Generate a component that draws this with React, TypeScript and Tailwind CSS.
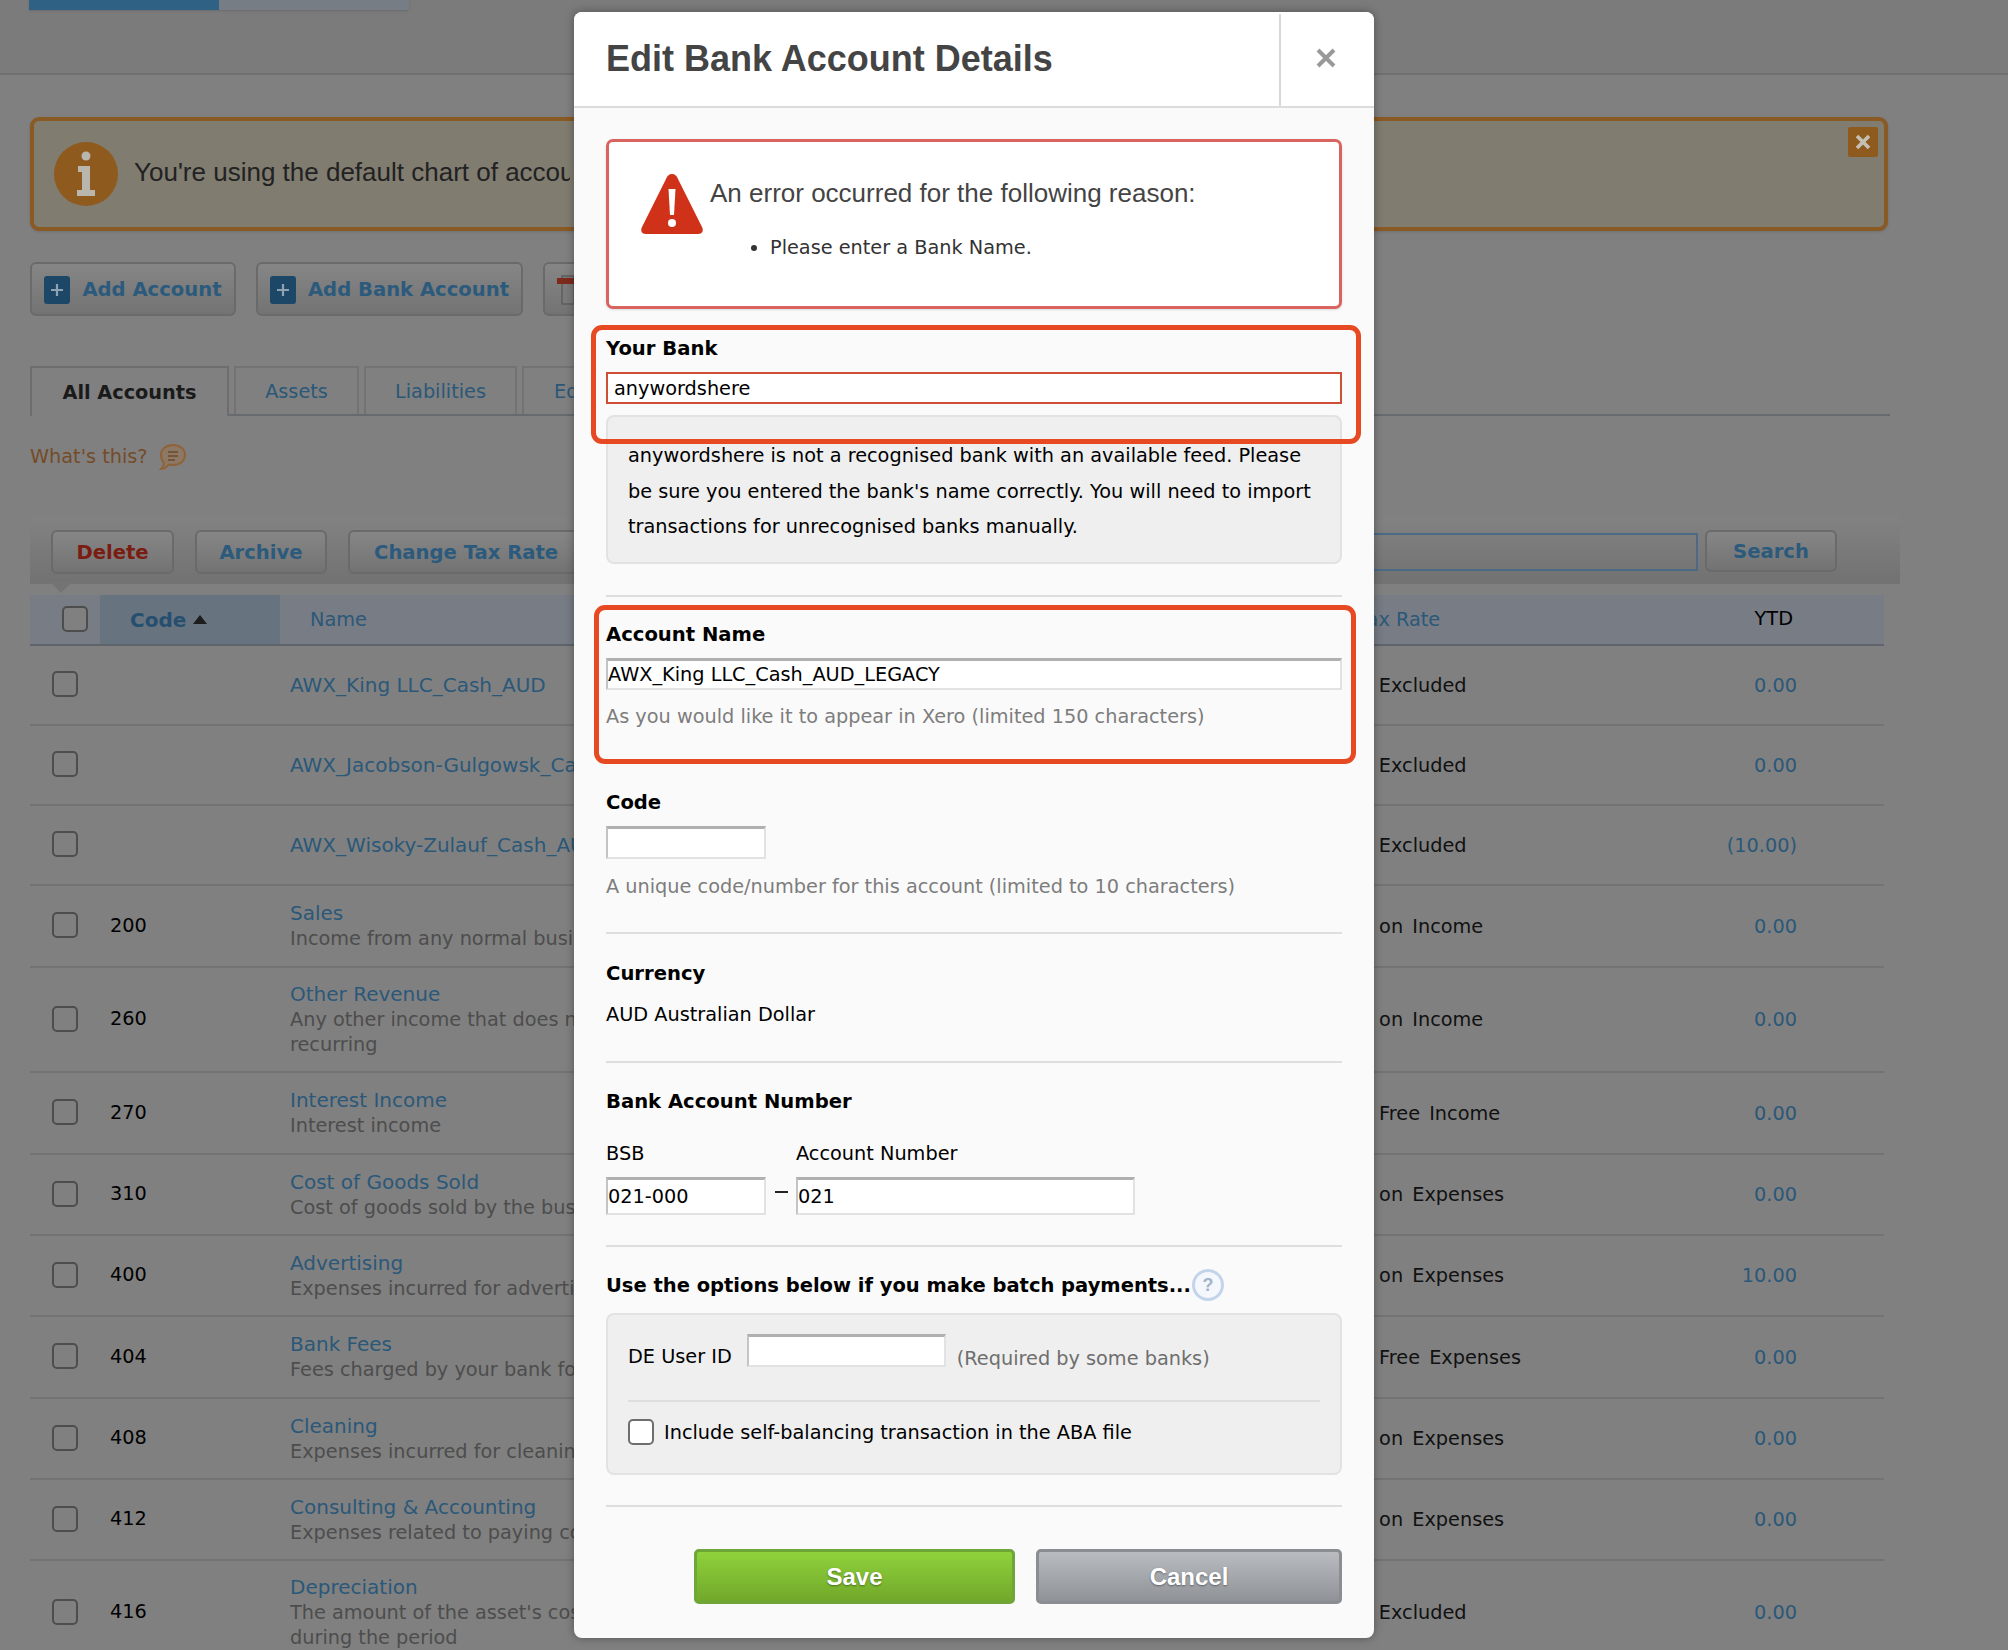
import React from 'react';

const ROWS = [
  { code: '', name: 'AWX_King LLC_Cash_AUD', tax: 'BAS Excluded', ytd: '0.00', h: 'h-[80px]' },
  { code: '', name: 'AWX_Jacobson-Gulgowsk_Cash_AUD', tax: 'BAS Excluded', ytd: '0.00', h: 'h-[80px]' },
  { code: '', name: 'AWX_Wisoky-Zulauf_Cash_AUD', tax: 'BAS Excluded', ytd: '(10.00)', h: 'h-[80px]' },
  { code: '200', name: 'Sales', desc: ['Income from any normal business activity'], tax: 'GST on Income', ytd: '0.00', h: 'h-[82px]' },
  { code: '260', name: 'Other Revenue', desc: ['Any other income that does not relate to normal business', 'recurring'], tax: 'GST on Income', ytd: '0.00', h: 'h-[105px]' },
  { code: '270', name: 'Interest Income', desc: ['Interest income'], tax: 'GST Free Income', ytd: '0.00', h: 'h-[82px]' },
  { code: '310', name: 'Cost of Goods Sold', desc: ['Cost of goods sold by the business'], tax: 'GST on Expenses', ytd: '0.00', h: 'h-[81px]' },
  { code: '400', name: 'Advertising', desc: ['Expenses incurred for advertising'], tax: 'GST on Expenses', ytd: '10.00', h: 'h-[81px]' },
  { code: '404', name: 'Bank Fees', desc: ['Fees charged by your bank for transactions'], tax: 'GST Free Expenses', ytd: '0.00', h: 'h-[82px]' },
  { code: '408', name: 'Cleaning', desc: ['Expenses incurred for cleaning'], tax: 'GST on Expenses', ytd: '0.00', h: 'h-[81px]' },
  { code: '412', name: 'Consulting & Accounting', desc: ['Expenses related to paying consultants'], tax: 'GST on Expenses', ytd: '0.00', h: 'h-[81px]' },
  { code: '416', name: 'Depreciation', desc: ["The amount of the asset's cost (based on its useful life)", 'during the period'], tax: 'BAS Excluded', ytd: '0.00', h: 'h-[105px]' },
];

const Check = ({ className = '' }: { className?: string }) => (
  <div className={`w-[26px] h-[26px] shrink-0 rounded-[5px] border-2 border-[#4d4d4d] bg-[#808080] ${className}`} />
);

const PlusIcon = () => (
  <svg width="26" height="30" viewBox="0 0 26 30" className="shrink-0">
    <rect x="0" y="1" width="26" height="28" rx="3" fill="#1d4767" />
    <path d="M13 9v12M7 15h12" stroke="#8fa3b3" strokeWidth="2.200" />
  </svg>
);

const GreyBtn = ({ children, className = '' }: { children: React.ReactNode; className?: string }) => (
  <div className={`flex items-center justify-center rounded-[6px] border-2 border-[#6a6a6a] bg-gradient-to-b from-[#868686] to-[#737373] pt-[2px] font-bold text-[#2b5a7c] ${className}`}>
    {children}
  </div>
);

const Divider = ({ className = '' }: { className?: string }) => <div className={`h-[2px] bg-[#dedede] ${className}`} />;

const Field = ({ className = '', value = '', tone = 'grey' }: { className?: string; value?: string; tone?: 'grey' | 'red' }) => (
  <div
    className={`flex items-center bg-white pt-[2px] text-black ${
      tone === 'red' ? 'border-2 border-[#cf4f36] pl-[6px]' : 'border-2 border-t-[3px] border-[#e2e2e2] border-t-[#b0b0b0] border-l-[#c4c4c4] pl-0'
    } ${className}`}
  >
    {value}
  </div>
);

const Label = ({ children, className = '' }: { children: React.ReactNode; className?: string }) => (
  <div className={`h-[24px] leading-[26px] text-[19.600px] font-bold text-black ${className}`}>{children}</div>
);

const Help = ({ children, className = '' }: { children: React.ReactNode; className?: string }) => (
  <div className={`h-[24px] leading-[26px] text-[#7d7d7d] ${className}`}>{children}</div>
);

const Background = () => (
  <div>
    {/* HEADER */}
    <div className="h-[75px] bg-[#7b7b7b] border-b-2 border-[#707070]">
      <div className="ml-[29px] flex h-[10px] w-[380px] shadow">
        <div className="w-[190px] bg-[#2f6184]" />
        <div className="flex-1 bg-[#767d84]" />
      </div>
    </div>

    {/* NOTICE */}
    <div className="ml-[30px] mt-[42px] relative flex h-[114px] w-[1858px] items-center rounded-[9px] border-[4px] border-[#8a5a24] bg-[#807c70] pl-[20px] shadow">
      <div className="flex h-[64px] w-[64px] shrink-0 items-center justify-center rounded-full bg-[#8f5a1e]">
        <svg width="22" height="46" viewBox="0 0 22 46">
          <circle cx="11" cy="5" r="4.500" fill="#b9b6ae" />
          <path d="M3 15h12v24h5v6H2v-6h5V21H3z" fill="#b9b6ae" />
        </svg>
      </div>
      <div className="ml-[16px] w-[436px] -translate-y-[2px] overflow-hidden whitespace-nowrap font-['Liberation_Sans',sans-serif] text-[26px] text-[#222]">You're using the default chart of accounts</div>
      <div className="absolute right-[6px] top-[6px] flex h-[30px] w-[30px] items-center justify-center rounded-[2px] bg-[#8f5a1e]">
        <svg width="18" height="18" viewBox="0 0 18 18"><path d="M3 3l12 12M15 3L3 15" stroke="#c4c0b6" strokeWidth="3.600" /></svg>
      </div>
    </div>

    {/* ACTIONS */}
    <div className="ml-[30px] mt-[31px] flex h-[54px] gap-[20px] text-[19.600px]">
      <GreyBtn className="w-[206px] gap-[12px]"><PlusIcon /><span>Add Account</span></GreyBtn>
      <GreyBtn className="w-[267px] gap-[12px]"><PlusIcon /><span>Add Bank Account</span></GreyBtn>
      <GreyBtn className="w-[200px] justify-start pl-[12px]">
        <svg width="20" height="36" viewBox="0 0 20 36" className="shrink-0">
          <path d="M5 4h12v28H5z" fill="#7a7a7a" stroke="#5e5e5e" strokeWidth="1.500" />
          <rect x="0" y="6" width="18" height="6" fill="#7c2a1c" />
        </svg>
      </GreyBtn>
    </div>

    {/* TABS */}
    <div className="ml-[30px] mt-[50px] flex h-[50px] w-[1860px] items-stretch gap-[5px] border-b-2 border-[#676b6f] text-[#2b5879]">
      <div className="flex w-[199px] items-center justify-center border-x-2 border-t-2 border-[#6d6d6d] pt-[2px] font-bold text-[#1a1a1a] -mb-[2px] bg-[#808080]">All Accounts</div>
      <div className="flex w-[125px] items-center justify-center border-x-2 border-t-2 border-[#737373] pt-[2px]">Assets</div>
      <div className="flex w-[153px] items-center justify-center border-x-2 border-t-2 border-[#737373] pt-[2px]">Liabilities</div>
      <div className="flex w-[140px] items-center pl-[30px] border-x-2 border-t-2 border-[#737373] pt-[2px]">Equity</div>
    </div>

    <div className="ml-[30px] mt-[24px] flex h-[32px] items-center gap-[10px] pt-[2px] text-[#754b28]">
      <span>What's this?</span>
      <svg width="30" height="30" viewBox="0 0 30 30">
        <path d="M15 3c7 0 12 4 12 10s-5 10-12 10c-2 0-3 0-4-.5C9 25 6 27 3 27c2-2 3-4 3-6-2-2-3-5-3-8C3 7 8 3 15 3z" fill="#8c7864" stroke="#8f6237" strokeWidth="2" />
        <path d="M10 10h10M10 14h10M10 18h7" stroke="#6b4a2b" strokeWidth="1.600" />
      </svg>
    </div>

    {/* TOOLBAR */}
    <div className="relative ml-[30px] mt-[45px] flex h-[67px] w-[1870px] items-start gap-[21px] border-b-2 border-[#737373] bg-gradient-to-b from-[#828282] to-[#727272] pl-[21px] pt-[13px] text-[19.600px]">
      <GreyBtn className="h-[44px] w-[123px] !text-[#7a1c12]">Delete</GreyBtn>
      <GreyBtn className="h-[44px] w-[132px]">Archive</GreyBtn>
      <GreyBtn className="h-[44px] w-[230px] justify-start pl-[24px]">Change Tax Rate</GreyBtn>
      <div className="absolute left-[1040px] top-[16px] h-[38px] w-[628px] border-2 border-[#4d6a85]" />
      <GreyBtn className="absolute left-[1675px] top-[13px] h-[42px] w-[132px]">Search</GreyBtn>
      <div className="absolute left-[20px] top-[65px] h-0 w-0 border-x-[11px] border-t-[11px] border-x-transparent border-t-[#747474]" />
    </div>

    {/* TABLE */}
    <div className="ml-[30px] w-[1854px]">
      <div className="mt-[11px] flex h-[51px] items-stretch border-b-2 border-[#5f646a] bg-[#777c85] text-[#2b5879]">
        <div className="flex w-[70px] items-center pl-[32px]"><Check className="-mt-[2px]" /></div>
        <div className="flex w-[180px] items-center gap-[7px] bg-[#67737f] pl-[30px] text-[20px] font-bold text-[#264f6f]">
          Code
          <svg width="14" height="9" viewBox="0 0 14 9"><path d="M7 0l7 9H0z" fill="#1c1c1c" /></svg>
        </div>
        <div className="flex w-[1078px] items-center pl-[30px] pt-[2px]">Name</div>
        <div className="flex w-[400px] items-center pt-[2px]">Tax Rate</div>
        <div className="-ml-[50px] flex w-[85px] items-center justify-end text-black">YTD</div>
      </div>

      {ROWS.map((row, i) => (
        <div key={i} className={`flex items-center border-b-2 border-[#737373] ${row.h}`}>
          <div className="flex w-[70px] items-center pl-[22px]"><Check className="-mt-[2px]" /></div>
          <div className="w-[190px] pl-[10px] text-black">{row.code}</div>
          <div className="w-[1041px] leading-[25px]">
            <div className="w-[284px] overflow-hidden">
              <div className="whitespace-nowrap text-[20px] text-[#2b5879]">{row.name}</div>
              {row.desc?.map(line => (
                <div key={line} className="whitespace-nowrap text-[#4d4d4d]">{line}</div>
              ))}
            </div>
          </div>
          <div className="w-[387px] whitespace-nowrap pt-[2px] text-[#111] [word-spacing:3px]">{row.tax}</div>
          <div className="w-[79px] pt-[2px] text-right text-[#2b5879]">{row.ytd}</div>
        </div>
      ))}
    </div>
  </div>
);

const Modal = () => (
  <div className="absolute left-[574px] top-[12px] h-[1626px] w-[800px] overflow-hidden rounded-[8px] bg-[#fafafa] shadow-[0_0_10px_rgba(0,0,0,0.35)]">
    {/* HEADER */}
    <div className="flex h-[96px] items-stretch border-b-2 border-[#dcdcdc] bg-white">
      <h1 className="flex-1 pl-[32px] font-['Liberation_Sans',sans-serif] text-[36px] font-bold leading-[94px] text-[#444]">Edit Bank Account Details</h1>
      <div className="mt-[2px] flex w-[95px] items-center justify-center border-l-2 border-[#d8d8d8] pb-[5px] pr-[3px]">
        <svg width="22" height="22" viewBox="0 0 22 22"><path d="M3 3l16 16M19 3L3 19" stroke="#999" strokeWidth="4" /></svg>
      </div>
    </div>

    <div className="px-[32px]">
      {/* ERROR */}
      <div className="mt-[31px] flex h-[170px] rounded-[7px] border-[3px] border-[#d9645f] bg-white pl-[32px] pt-[31px] shadow">
        <svg width="62" height="62" viewBox="0 0 62 62" className="shrink-0">
          <path d="M31 1c3 0 5 2 6 5l24 48c2 4 0 7-4 7H5c-4 0-6-3-4-7L25 6c1-3 3-5 6-5z" fill="#cf3219" />
          <path d="M27.500 16h7l-1.500 26h-4z" fill="#fff" />
          <circle cx="31" cy="50" r="4" fill="#fff" />
        </svg>
        <div className="ml-[7px]">
          <div className="font-['Liberation_Sans',sans-serif] text-[26px] leading-[40px] text-[#444]">An error occurred for the following reason:</div>
          <ul className="mt-[23px] ml-[60px] list-disc text-[#333] leading-[24px]">
            <li>Please enter a Bank Name.</li>
          </ul>
        </div>
      </div>

      {/* YOUR BANK */}
      <Label className="mt-[27px]">Your Bank</Label>
      <Field tone="red" value="anywordshere" className="mt-[12px] h-[32px]" />
      <div className="mt-[11px] h-[149px] rounded-[8px] border-2 border-[#e2e2e2] bg-[#efefef] pl-[20px] pt-[21px] leading-[35.500px] text-black">
        anywordshere is not a recognised bank with an available feed. Please
        <br />
        be sure you entered the bank's name correctly. You will need to import
        <br />
        transactions for unrecognised banks manually.
      </div>
      <Divider className="mt-[31px]" />

      {/* ACCOUNT NAME */}
      <Label className="mt-[25px]">Account Name</Label>
      <Field value="AWX_King LLC_Cash_AUD_LEGACY" className="mt-[12px] h-[32px]" />
      <Help className="mt-[14px]">As you would like it to appear in Xero (limited 150 characters)</Help>

      {/* CODE */}
      <Label className="mt-[62px]">Code</Label>
      <Field className="mt-[12px] h-[33px] w-[160px]" />
      <Help className="mt-[15px]">A unique code/number for this account (limited to 10 characters)</Help>
      <Divider className="mt-[34px]" />

      {/* CURRENCY */}
      <Label className="mt-[27px]">Currency</Label>
      <div className="mt-[17px] h-[24px] leading-[26px] text-black">AUD Australian Dollar</div>
      <Divider className="mt-[35px]" />

      {/* BANK ACCOUNT NUMBER */}
      <Label className="mt-[26px]">Bank Account Number</Label>
      <div className="mt-[28px] flex text-black">
        <div className="w-[160px]">
          <div className="h-[24px] leading-[26px]">BSB</div>
          <Field value="021-000" className="mt-[12px] h-[38px]" />
        </div>
        <div className="flex w-[30px] items-start justify-center pt-[50px]">
          <div className="h-[2px] w-[13px] bg-[#222]" />
        </div>
        <div className="w-[339px]">
          <div className="h-[24px] leading-[26px]">Account Number</div>
          <Field value="021" className="mt-[12px] h-[38px]" />
        </div>
      </div>
      <Divider className="mt-[30px]" />

      {/* BATCH PAYMENTS */}
      <div className="mt-[26px] flex h-[24px] items-center">
        <span className="pt-[2px] text-[19.500px] font-bold leading-[24px] text-black">Use the options below if you make batch payments...</span>
        <svg width="34" height="34" viewBox="0 0 34 34" className="shrink-0">
          <circle cx="17" cy="17" r="14.500" fill="#f4f7fb" stroke="#c3d4ea" strokeWidth="3" />
          <text x="17" y="23" textAnchor="middle" fontSize="18" fontWeight="700" fill="#a3b4cc" fontFamily="Liberation Sans, sans-serif">?</text>
        </svg>
      </div>
      <div className="mt-[16px] h-[162px] rounded-[8px] border-2 border-[#e2e2e2] bg-[#efefef] px-[20px]">
        <div className="flex h-[85px] items-start pt-[19px]">
          <span className="mt-[11px] leading-[24px] text-black">DE User ID</span>
          <Field className="ml-[15px] h-[33px] w-[199px]" />
          <span className="ml-[11px] mt-[13px] leading-[24px] text-[#6e6e6e]">(Required by some banks)</span>
        </div>
        <Divider />
        <div className="mt-[15px] flex items-center gap-[10px] text-black">
          <div className="h-[26px] w-[26px] rounded-[5px] border-2 border-[#6e6e6e] bg-white" />
          <span className="pt-[2px]">Include self-balancing transaction in the ABA file</span>
        </div>
      </div>
      <Divider className="mt-[30px]" />

      {/* FOOTER */}
      <div className="mt-[42px] flex justify-end gap-[21px] font-['Liberation_Sans',sans-serif] text-[24px] font-bold text-white [text-shadow:0_1px_2px_rgba(0,0,0,0.4)]">
        <div className="flex h-[55px] w-[321px] items-center justify-center rounded-[5px] border-[3px] border-[#6fa63a] bg-gradient-to-b from-[#8fd23c] to-[#72a82a]">Save</div>
        <div className="flex h-[55px] w-[306px] items-center justify-center rounded-[5px] border-[3px] border-[#8a8d92] bg-gradient-to-b from-[#b9bcc0] to-[#8f9297]">Cancel</div>
      </div>
    </div>

    {/* ANNOTATIONS */}
    <div className="absolute left-[17px] top-[313px] h-[119px] w-[770px] rounded-[11px] border-[5px] border-[#e74a22]" />
    <div className="absolute left-[20px] top-[593px] h-[159px] w-[762px] rounded-[11px] border-[5px] border-[#e74a22]" />
  </div>
);

export default function App() {
  return (
    <div className="relative h-[1650px] w-[2008px] overflow-hidden bg-[#808080] font-['DejaVu_Sans',sans-serif] text-[19.300px]">
      <Background />
      <Modal />
    </div>
  );
}
